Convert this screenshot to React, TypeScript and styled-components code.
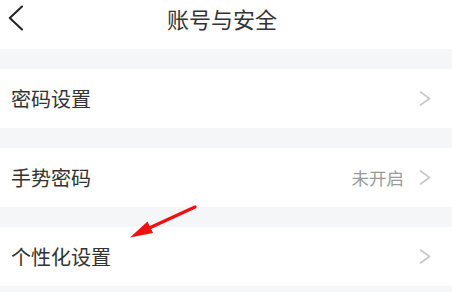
import React from "react";
import styled, { createGlobalStyle } from "styled-components";

const Global = createGlobalStyle`
  html, body { margin: 0; padding: 0; background: #f5f6f8; }
  body { font-family: "Noto Sans CJK SC", "Noto Sans", sans-serif; }
`;

const Page = styled.div`
  position: relative;
  width: 452px;
  height: 292px;
  overflow: hidden;
  background: #f5f6f8;
  display: flex;
  flex-direction: column;
`;

const Header = styled.header`
  height: 36px;
  padding-bottom: 13px;
  background: #fff;
  display: grid;
  grid-template-columns: 32px 1fr 40px;
  align-items: center;
`;

const Back = styled.button`
  border: 0;
  background: none;
  padding: 0 0 0 8px;
  height: 36px;
  display: flex;
  align-items: center;
  cursor: pointer;
`;

const Title = styled.h1`
  margin: 0;
  text-align: center;
  font-size: 22px;
  font-weight: 400;
  color: #333;
  line-height: 36px;
`;

const List = styled.div`
  display: flex;
  flex-direction: column;
  gap: 20px;
  padding-top: 20px;
`;

const Row = styled.div`
  height: 59px;
  background: #fff;
  display: flex;
  align-items: center;
  padding: 0 21px 0 11px;
`;

const Label = styled.span`
  flex: 1;
  font-size: 20px;
  color: #333;
  line-height: 1;
`;

const Value = styled.span`
  font-size: 17.5px;
  color: #9a9a9a;
  margin-right: 15px;
  line-height: 1;
`;

const Arrow = styled.svg`
  position: absolute;
  left: 0;
  top: 0;
  pointer-events: none;
`;

const Chevron = () => (
  <svg width="12" height="15" viewBox="0 0 12 15">
    <polyline points="1.5,1 10.5,7.5 1.5,14" fill="none" stroke="#c8c8c8" strokeWidth="1.6" strokeLinecap="round" strokeLinejoin="round" />
  </svg>
);

const items: { label: string; value?: string }[] = [
  { label: "密码设置" },
  { label: "手势密码", value: "未开启" },
  { label: "个性化设置" },
];

export default function App() {
  return (
    <>
      <Global />
      <Page>
        <Header>
          <Back aria-label="返回">
            <svg width="15" height="26" viewBox="0 0 15 26">
              <polyline points="14,1.5 1.8,13 14,24.5" fill="none" stroke="#222" strokeWidth="2" strokeLinecap="round" strokeLinejoin="round" />
            </svg>
          </Back>
          <Title>账号与安全</Title>
          <span />
        </Header>
        <List>
          {items.map((it) => (
            <Row key={it.label}>
              <Label>{it.label}</Label>
              {it.value && <Value>{it.value}</Value>}
              <Chevron />
            </Row>
          ))}
        </List>
        <Arrow width="452" height="292" viewBox="0 0 452 292">
          <line x1="195" y1="207" x2="146" y2="229.5" stroke="#f01010" strokeWidth="3.2" strokeLinecap="round" />
          <polygon points="130,237.5 147.5,221.5 153,233" fill="#f01010" />
        </Arrow>
      </Page>
    </>
  );
}
